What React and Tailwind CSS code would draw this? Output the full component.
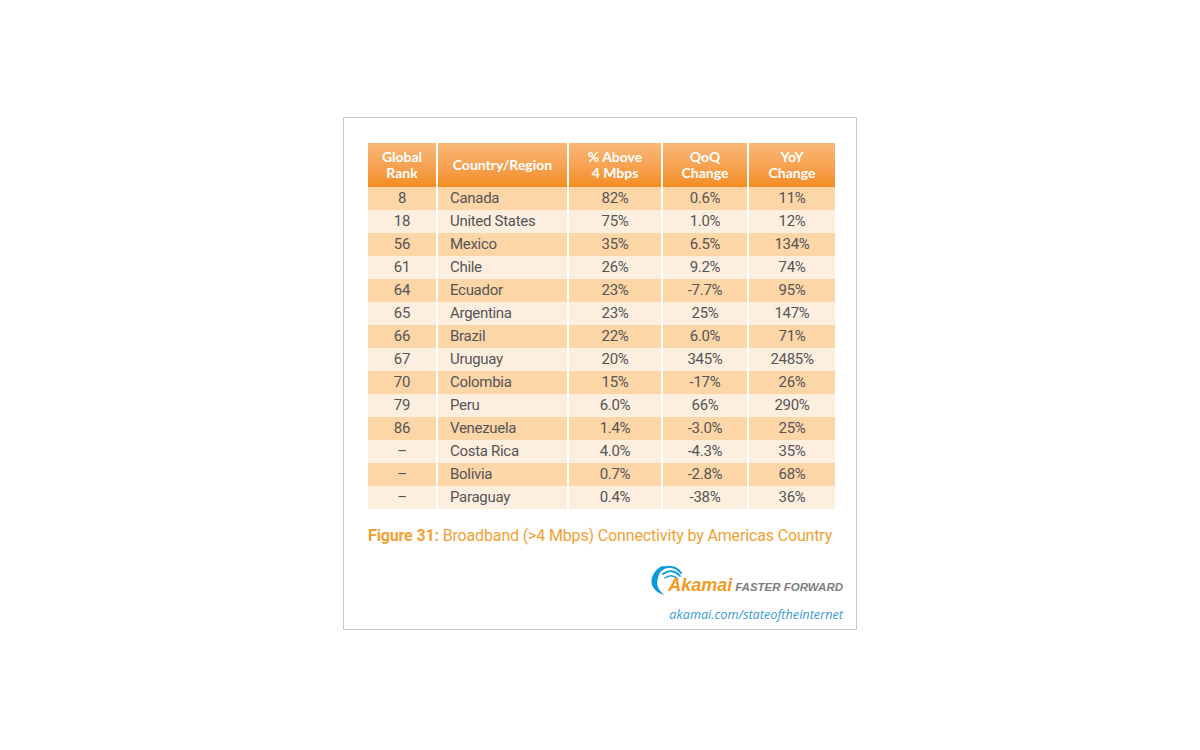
import React from 'react'

const rows = [
  ['8', 'Canada', '82%', '0.6%', '11%'],
  ['18', 'United States', '75%', '1.0%', '12%'],
  ['56', 'Mexico', '35%', '6.5%', '134%'],
  ['61', 'Chile', '26%', '9.2%', '74%'],
  ['64', 'Ecuador', '23%', '-7.7%', '95%'],
  ['65', 'Argentina', '23%', '25%', '147%'],
  ['66', 'Brazil', '22%', '6.0%', '71%'],
  ['67', 'Uruguay', '20%', '345%', '2485%'],
  ['70', 'Colombia', '15%', '-17%', '26%'],
  ['79', 'Peru', '6.0%', '66%', '290%'],
  ['86', 'Venezuela', '1.4%', '-3.0%', '25%'],
  ['–', 'Costa Rica', '4.0%', '-4.3%', '35%'],
  ['–', 'Bolivia', '0.7%', '-2.8%', '68%'],
  ['–', 'Paraguay', '0.4%', '-38%', '36%'],
]

const cols = 'grid grid-cols-[70px_131px_94px_86px_86px]'

// akamai swoosh: crescent plus three arcs
const AkamaiWave = () => (
  <svg width="32" height="30" viewBox="0 0 32 30" className="absolute left-[-18px] top-[-10px]">
    <path d="M12 1 C4 5 0 13 2 20 C4 25 8 28 14 30 C8 25 6 19 8 13 C9 8 12 4 16 2 Z" fill="#0a9ad9" />
    <path d="M11 5 C17 0 26 1 31 8" stroke="#0a9ad9" strokeWidth="2" fill="none" strokeLinecap="round" />
    <path d="M13 9 C18 5 25 5 30 11" stroke="#0a9ad9" strokeWidth="1.8" fill="none" strokeLinecap="round" />
    <path d="M15 13 C19 10 24 10 28 14" stroke="#0a9ad9" strokeWidth="1.5" fill="none" strokeLinecap="round" />
  </svg>
)

export default function App() {
  return (
    <div className="w-[1200px] h-[750px] bg-white flex justify-center pt-[117px]">
      <div className="w-[514px] h-[513px] border border-[#c9c9c9] pl-[24px] pt-[25px]">
        <div className="w-[467px]">
          <div
            className={`${cols} h-[44px] text-white font-bold text-[14px] leading-[16px] bg-gradient-to-b from-[#f9b877] to-[#f38d1f]`}
            style={{ fontFamily: 'Lato, "Open Sans", sans-serif' }}
          >
            <div className="border-r-2 border-white flex items-center justify-center text-center">Global<br />Rank</div>
            <div className="border-r-2 border-white flex items-center justify-center">Country/Region</div>
            <div className="border-r-2 border-white flex items-center justify-center text-center">% Above<br />4 Mbps</div>
            <div className="border-r-2 border-white flex items-center justify-center text-center">QoQ<br />Change</div>
            <div className="flex items-center justify-center text-center">YoY<br />Change</div>
          </div>
          <div style={{ fontFamily: 'Roboto, "Liberation Sans", sans-serif' }} className="text-[15px] text-[#555555] tracking-[-0.3px]">
            {rows.map((r, i) => (
              <div key={i} className={`${cols} h-[23px] leading-[23px] ${i % 2 === 0 ? 'bg-[#fdd6a8]' : 'bg-[#fdefe0]'}`}>
                <div className="border-r-2 border-white text-center">{r[0]}</div>
                <div className="border-r-2 border-white pl-[12px]">{r[1]}</div>
                <div className="border-r-2 border-white text-center">{r[2]}</div>
                <div className="border-r-2 border-white text-center">{r[3]}</div>
                <div className="text-center">{r[4]}</div>
              </div>
            ))}
          </div>
          <div
            className="mt-[17px] text-[16px] leading-[20px] tracking-[-0.15px] text-[#f3a033] whitespace-nowrap"
            style={{ fontFamily: 'Roboto, "Liberation Sans", sans-serif' }}
          >
            <span className="font-bold">Figure 31:</span> <span>Broadband (&gt;4 Mbps) Connectivity by Americas Country</span>
          </div>
          <div className="mt-[29px] -mr-[8px] flex flex-col items-end">
            <div
              className="relative flex items-baseline gap-[3px] italic font-bold leading-[20px]"
              style={{ fontFamily: '"Liberation Sans", Arial, sans-serif' }}
            >
              <AkamaiWave />
              <span className="relative text-[#f39a1f] text-[18px]">Akamai</span>
              <span className="text-[#7d7d7d] text-[11.5px]">FASTER FORWARD</span>
            </div>
            <div className="mt-[9px] italic text-[#3a9ad6] text-[12.7px] leading-[16px]" style={{ fontFamily: '"Open Sans", sans-serif' }}>
              akamai.com/stateoftheinternet
            </div>
          </div>
        </div>
      </div>
    </div>
  )
}
